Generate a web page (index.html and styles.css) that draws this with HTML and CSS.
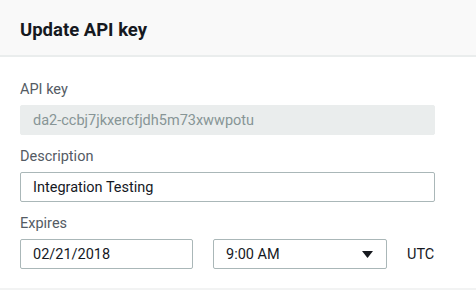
FILE: index.html
```html
<!DOCTYPE html>
<html lang="en">
<head>
    <meta charset="UTF-8">
    <title>Update API key</title>
    <link rel="stylesheet" href="styles.css">
</head>
<body>
    <div class="modal">
        <div class="modal-header">Update API key</div>
        <div class="modal-body">
            <div class="field">
                <label class="field-label">API key</label>
                <input class="field-input disabled" type="text" value="da2-ccbj7jkxercfjdh5m73xwwpotu" disabled>
            </div>
            <div class="field">
                <label class="field-label">Description</label>
                <input class="field-input" type="text" value="Integration Testing">
            </div>
            <div class="field">
                <label class="field-label">Expires</label>
                <div class="expires-row">
                    <input class="field-input date-input" type="text" value="02/21/2018">
                    <div class="select">
                        <span>9:00 AM</span>
                        <svg class="caret" width="11" height="7" viewBox="0 0 11 7"><path d="M0 0h11L5.5 7z" fill="#16191f"/></svg>
                    </div>
                    <span class="tz">UTC</span>
                </div>
            </div>
        </div>
    </div>
</body>
</html>
```

FILE: styles.css
```css
body {
    margin: 0;
    background: #fff;
    color: #16191f;
    font-family: Roboto, 'Liberation Sans', Arial, sans-serif;
}
.modal {
    border-bottom: 2px solid #f2f3f3;
}
.modal-header {
    height: 57px;
    box-sizing: border-box;
    padding: 4px 20px 0 20px;
    display: flex;
    align-items: center;
    background: #f9f9f9;
    border-bottom: 2px solid #eaeded;
    font-size: 18.5px;
    font-weight: 700;
}
.modal-body {
    padding: 23px 20px 19px 20px;
}
.field {
    display: flex;
    flex-direction: column;
    gap: 5px;
    margin-bottom: 12px;
}
.field:last-child {
    margin-bottom: 0;
}
.field-label {
    font-size: 14.5px;
    line-height: 20px;
    color: #545b64;
}
.field-input {
    box-sizing: border-box;
    width: 415px;
    height: 30px;
    padding: 0 12px;
    border: 1px solid #aab7b8;
    border-radius: 2px;
    font-family: inherit;
    font-size: 14.5px;
    color: #16191f;
    background: #fff;
    outline: none;
}
.field-input.disabled {
    background: #eaeded;
    border-color: #eaeded;
    color: #879596;
}
.expires-row {
    display: flex;
    align-items: center;
    gap: 20px;
}
.date-input {
    width: 173px;
}
.select {
    box-sizing: border-box;
    width: 174px;
    height: 30px;
    padding: 0 13px 0 12px;
    border: 1px solid #aab7b8;
    border-radius: 2px;
    display: flex;
    align-items: center;
    justify-content: space-between;
    font-size: 14.5px;
}
.tz {
    font-size: 14.5px;
}
```
